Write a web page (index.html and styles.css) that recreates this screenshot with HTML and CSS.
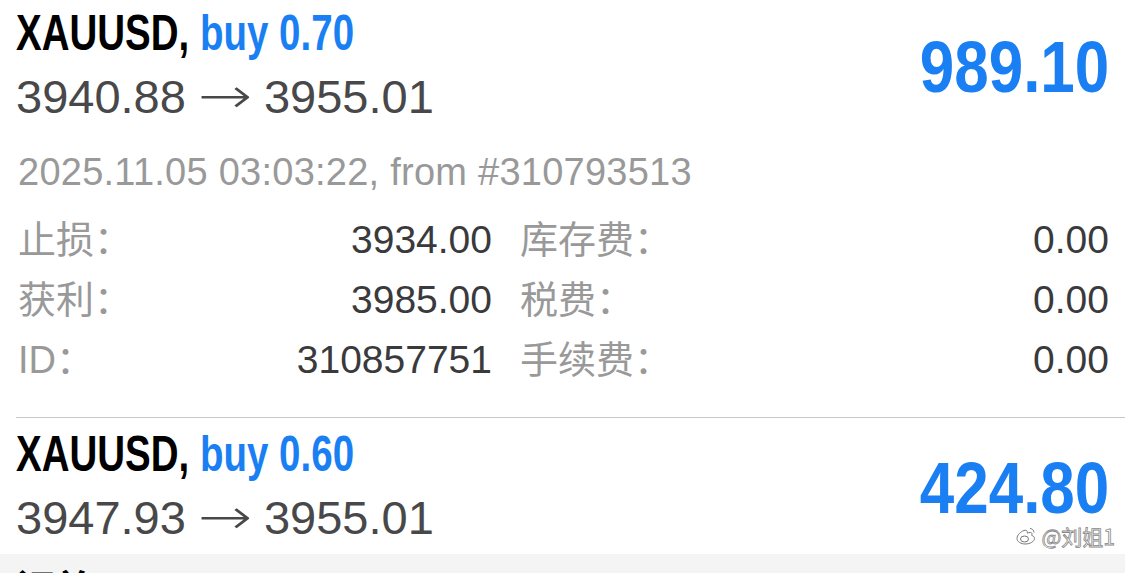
FILE: index.html
```html
<!DOCTYPE html>
<html lang="zh">
<head>
  <meta charset="UTF-8">
  <meta name="viewport" content="width=device-width, initial-scale=1.0">
  <title>持仓</title>
  <link rel="stylesheet" href="styles.css">
</head>
<body>
  <div class="page">
    <div class="list">
      <div class="position">
        <div class="head">
          <div class="info">
            <div class="title"><span class="sym">XAUUSD,</span> <span class="side">buy 0.70</span></div>
            <div class="prices">3940.88 <span class="arrow">→</span> 3955.01</div>
          </div>
          <div class="profit"><span>989.10</span></div>
        </div>
        <div class="meta">2025.11.05 03:03:22, from #310793513</div>
        <div class="stats">
          <div class="stat"><span class="label">止损：</span><span class="value">3934.00</span></div>
          <div class="stat"><span class="label">库存费：</span><span class="value">0.00</span></div>
          <div class="stat"><span class="label">获利：</span><span class="value">3985.00</span></div>
          <div class="stat"><span class="label">税费：</span><span class="value">0.00</span></div>
          <div class="stat"><span class="label">ID：</span><span class="value">310857751</span></div>
          <div class="stat"><span class="label">手续费：</span><span class="value">0.00</span></div>
        </div>
      </div>

      <div class="position collapsed">
        <div class="head">
          <div class="info">
            <div class="title"><span class="sym">XAUUSD,</span> <span class="side">buy 0.60</span></div>
            <div class="prices">3947.93 <span class="arrow">→</span> 3955.01</div>
          </div>
          <div class="profit"><span>424.80</span></div>
        </div>
      </div>
    </div>

    <div class="section">订单</div>

    <!-- watermark -->
    <div class="mark">
      <svg width="22" height="20" viewBox="0 0 22 20">
        <path d="M9 4.5c-3.5 1.2-7 4.6-7 8 0 3.2 4 5.5 8.2 5.5 5 0 9.3-2.6 9.3-5.6 0-1.8-1.6-2.6-2.8-3 .5-1.3.4-2.9-1.4-3-1 0-2.4.6-3 .8.4-1.5-.2-3.7-3.3-2.7z" fill="#fff" stroke="#777" stroke-width="1"/>
        <ellipse cx="9.5" cy="13" rx="4" ry="3" fill="none" stroke="#777" stroke-width="1"/>
        <path d="M15 2.5c2 0 4 1.6 4 4" fill="none" stroke="#777" stroke-width="1"/>
      </svg>
      <span>@刘姐1</span>
    </div>
  </div>
</body>
</html>
```

FILE: styles.css
```css
html, body { margin: 0; padding: 0; background: #fff; }
body { font-family: "Liberation Sans", Arial, "Noto Sans CJK SC", sans-serif; overflow: hidden; }

.page { position: relative; width: 1125px; height: 573px; overflow: hidden; }
.list { margin-top: -3px; }

.position { padding: 11px 16px 27px 16px; }
.position + .position { border-top: 1px solid #c8c7cc; margin-left: 16px; padding-left: 0; }
.position.collapsed { padding-bottom: 13px; }

.head { display: flex; justify-content: space-between; align-items: flex-start; }

/* condensed bold look: Arial-width bold squeezed sideways */
.title {
  font-weight: bold;
  font-size: 50px;
  line-height: 50px;
  color: #000;
  white-space: nowrap;
  transform: scaleX(0.77);
  transform-origin: left center;
}
.side { color: #1a7ff2; }
.prices { margin-top: 15px; font-size: 47px; line-height: 46px; color: #48484a; white-space: nowrap; }
.arrow {
  display: inline-block;
  margin: 0 5px;
  font-family: "DejaVu Sans", sans-serif;
  font-weight: 200;
  font-size: 50px;
  transform: scaleX(1.3);
}

.profit {
  margin-top: 23px;
  font-weight: bold;
  font-size: 72px;
  line-height: 72px;
  color: #1a7ff2;
  transform: scaleX(0.86);
  transform-origin: right center;
}

.meta { margin-top: 34px; font-size: 38px; line-height: 37px; letter-spacing: 0.25px; color: #999; padding-left: 2px; white-space: nowrap; }

.stats {
  margin-top: 19px;
  display: grid;
  grid-template-columns: 476px 1fr;
  column-gap: 26px;
}
.stat { display: flex; justify-content: space-between; font-size: 39px; line-height: 60px; white-space: nowrap; }
.label { color: #999; padding-left: 2px; font-size: 38px; }
.value { color: #3a3a3c; }

.section {
  background: #f4f4f4;
  height: 60px;
  padding: 10px 16px 0;
  font-family: "Noto Sans CJK SC", sans-serif;
  font-weight: bold;
  font-size: 38px;
  line-height: 44px;
  color: #000;
}

.mark {
  position: absolute;
  right: 10px;
  top: 521px;
  display: flex;
  align-items: center;
  gap: 4px;
  font-family: "Noto Sans CJK SC", sans-serif;
  font-size: 21px;
  color: #fff;
  -webkit-text-stroke: 0.8px #888;
}
```
